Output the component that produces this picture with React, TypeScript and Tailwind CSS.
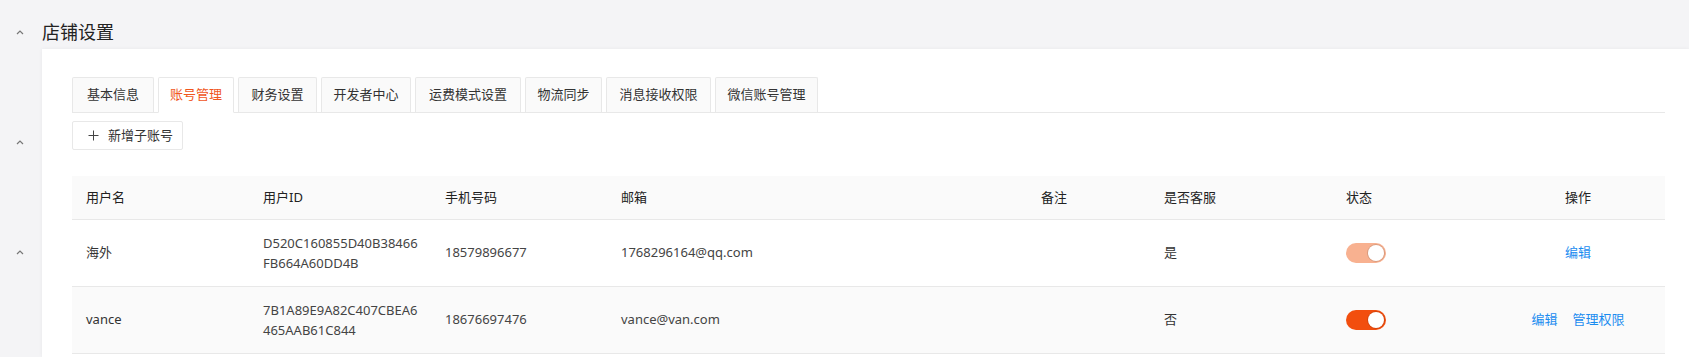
import React from "react";

const tabs = [
  { label: "基本信息", w: "w-[82px]" },
  { label: "账号管理", w: "w-[76px]", active: true },
  { label: "财务设置", w: "w-[79px]" },
  { label: "开发者中心", w: "w-[90px]" },
  { label: "运费模式设置", w: "w-[106px]" },
  { label: "物流同步", w: "w-[77px]" },
  { label: "消息接收权限", w: "w-[105px]" },
  { label: "微信账号管理", w: "w-[103px]" },
];

const rows = [
  {
    name: "海外",
    id: ["D520C160855D40B38466", "FB664A60DD4B"],
    phone: "18579896677",
    email: "1768296164@qq.com",
    service: "是",
    on: false,
    actions: ["编辑"],
  },
  {
    name: "vance",
    id: ["7B1A89E9A82C407CBEA6", "465AAB61C844"],
    phone: "18676697476",
    email: "vance@van.com",
    service: "否",
    on: true,
    actions: ["编辑", "管理权限"],
  },
];

const Caret = () => (
  <svg width="8" height="5" viewBox="0 0 8 5" className="text-[#777]">
    <path d="M1 4 L4 1 L7 4" fill="none" stroke="currentColor" strokeWidth="1.2" />
  </svg>
);

const Toggle = ({ on }: { on: boolean }) => (
  <div
    className={
      on
        ? "w-[40px] h-[20px] rounded-full bg-[#f24e0e] flex items-center justify-end pr-[2px]"
        : "w-[40px] h-[20px] rounded-full bg-[#f8b190] flex items-center justify-end pr-[2px]"
    }
  >
    <div className="w-[16px] h-[16px] rounded-full bg-white shadow-[0_0_0_1px_rgba(0,0,0,0.12)]" />
  </div>
);

export default function App() {
  return (
    <div className="min-h-[357px] h-screen flex bg-[#f4f4f6] font-['Noto_Sans','Noto_Sans_CJK_SC',sans-serif] text-[#333]">
      {/* left rail */}
      <div className="w-[42px] shrink-0 flex flex-col items-center pr-[2px]">
        <div className="mt-[30px]">
          <Caret />
        </div>
        <div className="mt-[105px]">
          <Caret />
        </div>
        <div className="mt-[105px]">
          <Caret />
        </div>
      </div>

      <div className="flex-1 flex flex-col min-w-0">
        <div className="h-[49px] pt-[20px] leading-[24px] text-[18px] text-[#222]">店铺设置</div>

        <div className="flex-1 bg-white shadow-[0_0_4px_rgba(0,0,0,0.05)] pl-[30px] pr-[24px] pt-[28px]">
          {/* tabs */}
          <div className="flex items-end gap-[4px] border-b border-[#e8e8e8]">
            {tabs.map((t) => (
              <div
                key={t.label}
                className={
                  t.active
                    ? `${t.w} h-[36px] -mb-px flex items-center justify-center text-[13px] text-[#f0561d] bg-white border border-[#e8e8e8] border-b-white rounded-t-[2px]`
                    : `${t.w} h-[35px] flex items-center justify-center text-[13px] text-[#333] bg-[#fafafa] border border-[#e8e8e8] border-b-0 rounded-t-[2px]`
                }
              >
                {t.label}
              </div>
            ))}
          </div>

          {/* add button */}
          <button className="mt-[8px] h-[29px] w-[111px] flex items-center pl-[15px] gap-[9px] border border-[#e8e8e8] rounded-[2px] bg-white text-[13px] text-[#333]">
            <svg width="11" height="11" viewBox="0 0 11 11">
              <path d="M5.5 0.5 V10.5 M0.5 5.5 H10.5" stroke="#444" strokeWidth="1" />
            </svg>
            新增子账号
          </button>

          {/* table */}
          <table className="mt-[26px] w-full table-fixed border-collapse text-[13px]">
            <colgroup>
              <col className="w-[177px]" />
              <col className="w-[182px]" />
              <col className="w-[176px]" />
              <col className="w-[420px]" />
              <col className="w-[123px]" />
              <col className="w-[182px]" />
              <col className="w-[159px]" />
              <col />
            </colgroup>
            <thead>
              <tr className="h-[43px] bg-[#fafafa] border-b border-[#e8e8e8] text-[#222]">
                <th className="text-left font-normal pl-[14px]">用户名</th>
                <th className="text-left font-normal pl-[14px]">用户ID</th>
                <th className="text-left font-normal pl-[14px]">手机号码</th>
                <th className="text-left font-normal pl-[14px]">邮箱</th>
                <th className="text-left font-normal pl-[14px]">备注</th>
                <th className="text-left font-normal pl-[14px]">是否客服</th>
                <th className="text-left font-normal pl-[14px]">状态</th>
                <th className="text-center font-normal">操作</th>
              </tr>
            </thead>
            <tbody>
              {rows.map((r, i) => (
                <tr
                  key={r.name}
                  className={
                    i === 1
                      ? "h-[67px] bg-[#fafafa] border-b border-[#e8e8e8]"
                      : "h-[67px] bg-white border-b border-[#e8e8e8]"
                  }
                >
                  <td className="pl-[14px]">{r.name}</td>
                  <td className="pl-[14px] leading-[20px] text-[#444]">
                    <div>{r.id[0]}</div>
                    <div>{r.id[1]}</div>
                  </td>
                  <td className="pl-[14px] text-[#444]">{r.phone}</td>
                  <td className="pl-[14px] text-[#444]">{r.email}</td>
                  <td className="pl-[14px]"></td>
                  <td className="pl-[14px]">{r.service}</td>
                  <td className="pl-[14px]">
                    <Toggle on={r.on} />
                  </td>
                  <td>
                    <div className="flex justify-center gap-[15px] text-[#1a8cf0]">
                      {r.actions.map((a) => (
                        <span key={a}>{a}</span>
                      ))}
                    </div>
                  </td>
                </tr>
              ))}
            </tbody>
          </table>
        </div>
      </div>
    </div>
  );
}
